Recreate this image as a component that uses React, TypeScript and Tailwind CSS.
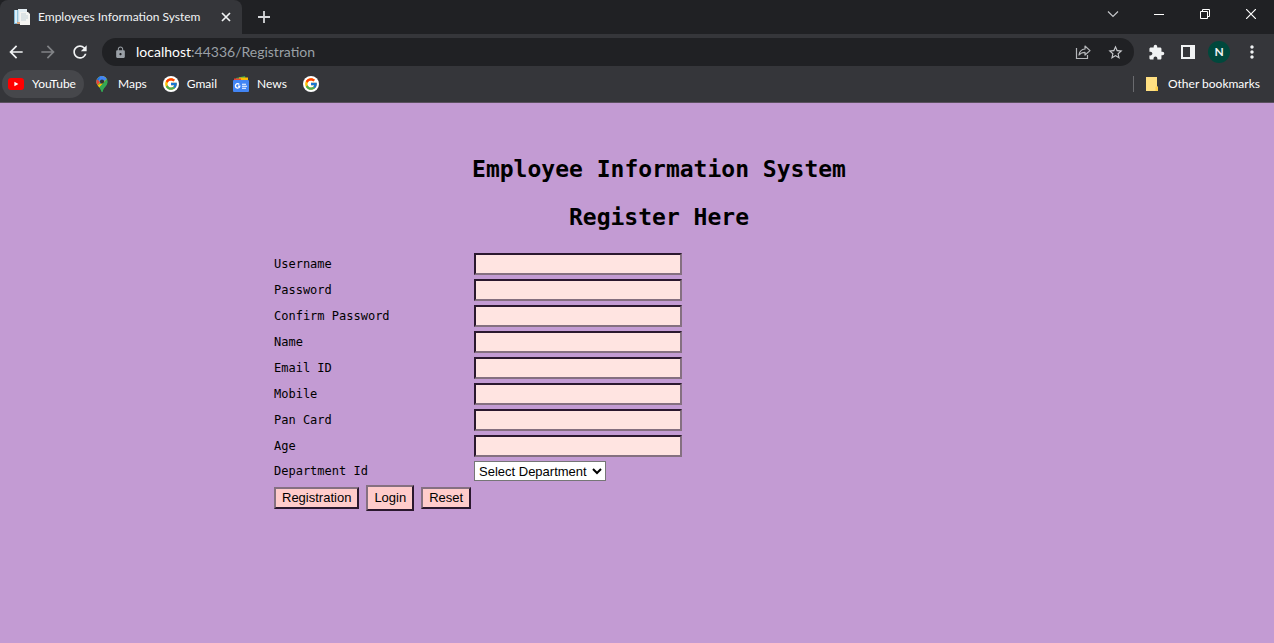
import React from "react";
import { MdArrowBack, MdArrowForward, MdExtension, MdLock, MdMoreVert, MdRefresh, MdStarBorder } from "react-icons/md";
import { FcGoogle } from "react-icons/fc";

function PageIcon() {
  return (
    <svg width="16" height="16" viewBox="0 0 16 16" aria-hidden="true">
      <path d="M0 1h8v14H0z" fill="#7db8d8" />
      <path d="M1 1h2v13H1z" fill="#d9eef8" />
      <path d="M4 0h9v15H4z" fill="#e4eef3" />
      <path d="M6 3h8l2 2v11H6z" fill="#f4f4f1" />
      <path d="M7 5h5M7 7h7M7 9h7M7 11h5" stroke="#c3d1d7" />
      <path d="M4 1v13" stroke="#a9cfe0" />
      <path d="M3 13h3v2H3z" fill="#d9a67c" />
    </svg>
  );
}

function YouTubeIcon() {
  return (
    <svg width="16" height="16" viewBox="0 0 16 16" aria-hidden="true">
      <rect y="2" width="16" height="12" rx="3" fill="#f00" />
      <path d="M6.4 5.8v4.4L10.400 8z" fill="#fff" />
    </svg>
  );
}

function MapsIcon() {
  return (
    <svg width="16" height="16" viewBox="0 0 16 16" aria-hidden="true">
      <clipPath id="pin">
        <path d="M8 0a5.6 5.6 0 0 0-5.6 5.6c0 4 3.7 5.2 4.9 9.6.2.9 1.200.9 1.400 0 1.200-4.400 4.900-5.600 4.900-9.600A5.600 5.600 0 0 0 8 0z" />
      </clipPath>
      <g clipPath="url(#pin)">
        <path d="M0 0h16v16H0z" fill="#34a853" />
        <path d="M0 12 14 0H0z" fill="#fbbc04" />
        <path d="M0 9.500 8 1l3-3H0z" fill="#1a73e8" />
        <path d="M1 1.500 6 6 3.500 9 0 6z" fill="#ea4335" />
        <path d="M6 0h8v2l-7 6-2-3z" fill="#4285f4" />
        <path d="M14 2 4 13l-2-3 6-3z" fill="#fbbc04" />
        <path d="M13 3 5 12l3 4h6z" fill="#34a853" />
      </g>
      <circle cx="8" cy="5.600" r="2.100" fill="#303134" />
    </svg>
  );
}

function NewsIcon() {
  return (
    <svg width="16" height="16" viewBox="0 0 16 16" aria-hidden="true">
      <path d="M3 2 12 0l1 5H3z" fill="#34a853" />
      <path d="M6 1.500h9V6H6z" fill="#fbbc04" />
      <path d="M1 2.500h7V6H1z" fill="#ea4335" />
      <rect y="4" width="16" height="12" rx="1" fill="#4285f4" />
      <path d="M6.300 8.500A2.200 2.200 0 1 0 6.800 10.200H5" fill="none" stroke="#fff" strokeWidth="1.300" />
      <path d="M9 8.200h4M9 10.200h5M9 12.200h4" stroke="#fff" strokeWidth="1.100" />
    </svg>
  );
}

function GoogleIcon() {
  return (
    <span className="flex size-4 items-center justify-center rounded-full bg-white">
      <FcGoogle size={14} />
    </span>
  );
}

function ShareIcon() {
  return (
    <svg width="16" height="16" viewBox="0 0 16 16" fill="none" stroke="#b6b8bb" strokeWidth="1.200" aria-hidden="true">
      <path d="M1.500 4v10.500h11V11" />
      <path d="M4 11c.5-3.800 2.500-5.700 6-6V2l5 4.600-5 4.400V8.300C7.500 8.300 5.600 9 4 11z" strokeLinejoin="round" />
    </svg>
  );
}

function TabStrip() {
  return (
    <div className="flex h-[34px] items-stretch bg-[#202124]">
      <div className="flex w-[242px] items-center rounded-t-lg bg-[#35363a] pr-2 pl-3.5">
        <PageIcon />
        <span className="ml-2 flex-1 whitespace-nowrap">Employees Information System</span>
        <button type="button" aria-label="Close tab" className="flex size-4 items-center justify-center">
          <svg width="10" height="10" viewBox="0 0 10 10" stroke="#f1f3f4" strokeWidth="1.700" aria-hidden="true">
            <path d="m1 1 8 8M9 1 1 9" />
          </svg>
        </button>
      </div>
      <button type="button" aria-label="New tab" className="ml-3.5 flex w-4 items-center justify-center">
        <svg width="12" height="12" viewBox="0 0 12 12" stroke="#d5d7da" strokeWidth="1.800" aria-hidden="true">
          <path d="M6 0v12M0 6h12" />
        </svg>
      </button>
      <div className="ml-auto flex h-7 text-white">
        <button type="button" aria-label="Search tabs" className="flex w-[46px] items-center justify-center">
          <svg width="12" height="12" viewBox="0 0 12 12" fill="none" stroke="#c5c7ca" strokeWidth="1.200" aria-hidden="true">
            <path d="m1 3.500 5 5 5-5" />
          </svg>
        </button>
        <button type="button" aria-label="Minimize" className="flex w-[46px] items-center justify-center">
          <svg width="10" height="10" stroke="currentColor" aria-hidden="true">
            <path d="M0 5.500h10" />
          </svg>
        </button>
        <button type="button" aria-label="Restore" className="flex w-[46px] items-center justify-center">
          <svg width="10" height="10" fill="none" stroke="currentColor" aria-hidden="true">
            <path d="M.5 2.500h7v7h-7zM2.500 2.500v-2h7v7h-2" />
          </svg>
        </button>
        <button type="button" aria-label="Close" className="flex w-[46px] items-center justify-center">
          <svg width="10" height="10" stroke="currentColor" strokeWidth="1.200" aria-hidden="true">
            <path d="m0 0 10 10M10 0 0 10" />
          </svg>
        </button>
      </div>
    </div>
  );
}

function Toolbar() {
  return (
    <div className="flex h-9 items-center pr-3 pl-1.5 text-[#f1f3f4]">
      <button type="button" aria-label="Back" className="w-8"><MdArrowBack size={20} /></button>
      <button type="button" aria-label="Forward" className="w-8 text-[#818386]"><MdArrowForward size={20} /></button>
      <button type="button" aria-label="Reload" className="w-8"><MdRefresh size={20} /></button>
      <div className="flex h-7 flex-1 items-center rounded-full bg-[#202124] pr-2.5 pl-3 text-sm">
        <MdLock size={13} color="#9aa0a6" />
        <a href="#" className="ml-[9px] flex-1 text-[#9aa0a6]"><span className="text-white">localhost</span>:44336/Registration</a>
        <button type="button" aria-label="Share" className="mr-4"><ShareIcon /></button>
        <button type="button" aria-label="Bookmark this page"><MdStarBorder size={17} color="#c8cacd" /></button>
      </div>
      <button type="button" aria-label="Extensions" className="ml-3.5 w-8"><MdExtension size={17} /></button>
      <button type="button" aria-label="Side panel" className="w-8">
        <svg width="16" height="16" aria-hidden="true">
          <path d="M1 1h14v14H1zM3 3v10h7V3z" fill="#f1f3f4" fillRule="evenodd" />
        </svg>
      </button>
      <button type="button" aria-label="Profile" className="mr-3 -ml-1 flex size-[22px] items-center justify-center rounded-full bg-[#00483c] text-xs font-bold">N</button>
      <button type="button" aria-label="Menu"><MdMoreVert size={20} /></button>
    </div>
  );
}

function Bookmarks() {
  return (
    <nav aria-label="Bookmarks" className="flex h-[33px] items-start border-b border-[#5b505f] pr-3.5 pl-0.5 text-white">
      <a href="#" className="flex h-7 items-center gap-2 rounded-full bg-[#46474b] pr-2 pl-1.5"><YouTubeIcon />YouTube</a>
      <a href="#" className="ml-2.5 flex h-7 items-center gap-2"><MapsIcon />Maps</a>
      <a href="#" className="ml-4 flex h-7 items-center gap-2"><GoogleIcon />Gmail</a>
      <a href="#" className="ml-4 flex h-7 items-center gap-2"><NewsIcon />News</a>
      <a href="#" aria-label="Google" className="ml-4 flex h-7 items-center"><GoogleIcon /></a>
      <a href="#" className="ml-auto flex h-7 items-center gap-2">
        <span className="mr-1 h-4 w-px bg-[#6a6b6f]" />
        <svg width="14" height="14" viewBox="0 0 14 14" aria-hidden="true">
          <path d="M0 0h11v9l1 1v4H0z" fill="#ffe082" />
          <path d="M9.500 14v-4l1-.8 1.500 1V14z" fill="#ffd04c" />
        </svg>
        Other bookmarks
      </a>
    </nav>
  );
}

const fields = [
  { id: "username", label: "Username", type: "text" },
  { id: "password", label: "Password", type: "password" },
  { id: "confirm", label: "Confirm Password", type: "password" },
  { id: "name", label: "Name", type: "text" },
  { id: "email", label: "Email ID", type: "text" },
  { id: "mobile", label: "Mobile", type: "text" },
  { id: "pan", label: "Pan Card", type: "text" },
  { id: "age", label: "Age", type: "text" },
];

const buttonStyle =
  "border-2 border-t-[#857080] border-l-[#857080] border-r-[#2b182e] border-b-[#2b182e] bg-[#ffcccb] px-1.5 text-[13px] leading-[18px]";

export default function App() {
  return (
    <div className="flex min-h-screen flex-col bg-[#c39bd3]">
      <header className="bg-[#35363a] font-['Lato',sans-serif] text-xs text-[#f1f3f4]">
        <TabStrip />
        <Toolbar />
        <Bookmarks />
      </header>
      <main className="pt-13 pl-11 font-['DejaVu_Sans_Mono',monospace] text-black">
        <form className="mx-auto w-full max-w-[770px]" onSubmit={(e) => e.preventDefault()}>
          <h1 className="text-center text-[23px] leading-7 font-bold">Employee Information System</h1>
          <h2 className="mt-5 text-center text-[23px] leading-7 font-bold">Register Here</h2>
          <div className="mt-[22px] flex flex-col gap-1 text-xs">
            {fields.map((f) => (
              <div key={f.id} className="flex items-center">
                <label htmlFor={f.id} className="w-[200px]">{f.label}</label>
                <input
                  id={f.id}
                  type={f.type}
                  className="h-[22px] w-52 border-2 border-t-[#2b182e] border-r-[#857080] border-b-[#857080] border-l-[#2b182e] bg-[#ffe4e1] px-0.5 font-['Liberation_Sans',sans-serif] text-[13px]"
                />
              </div>
            ))}
            <div className="flex items-center">
              <label htmlFor="department" className="w-[200px]">Department Id</label>
              <select id="department" className="h-5 w-[132px] border border-[#767676] bg-white font-['Liberation_Sans',sans-serif] text-[13px]">
                <option>Select Department</option>
              </select>
            </div>
          </div>
          <div className="mt-1 flex items-center gap-[7px] font-['Liberation_Sans',sans-serif]">
            <button type="submit" className={buttonStyle}>Registration</button>
            <button type="button" className={`${buttonStyle} py-0.5`}>Login</button>
            <button type="reset" className={buttonStyle}>Reset</button>
          </div>
        </form>
      </main>
    </div>
  );
}
